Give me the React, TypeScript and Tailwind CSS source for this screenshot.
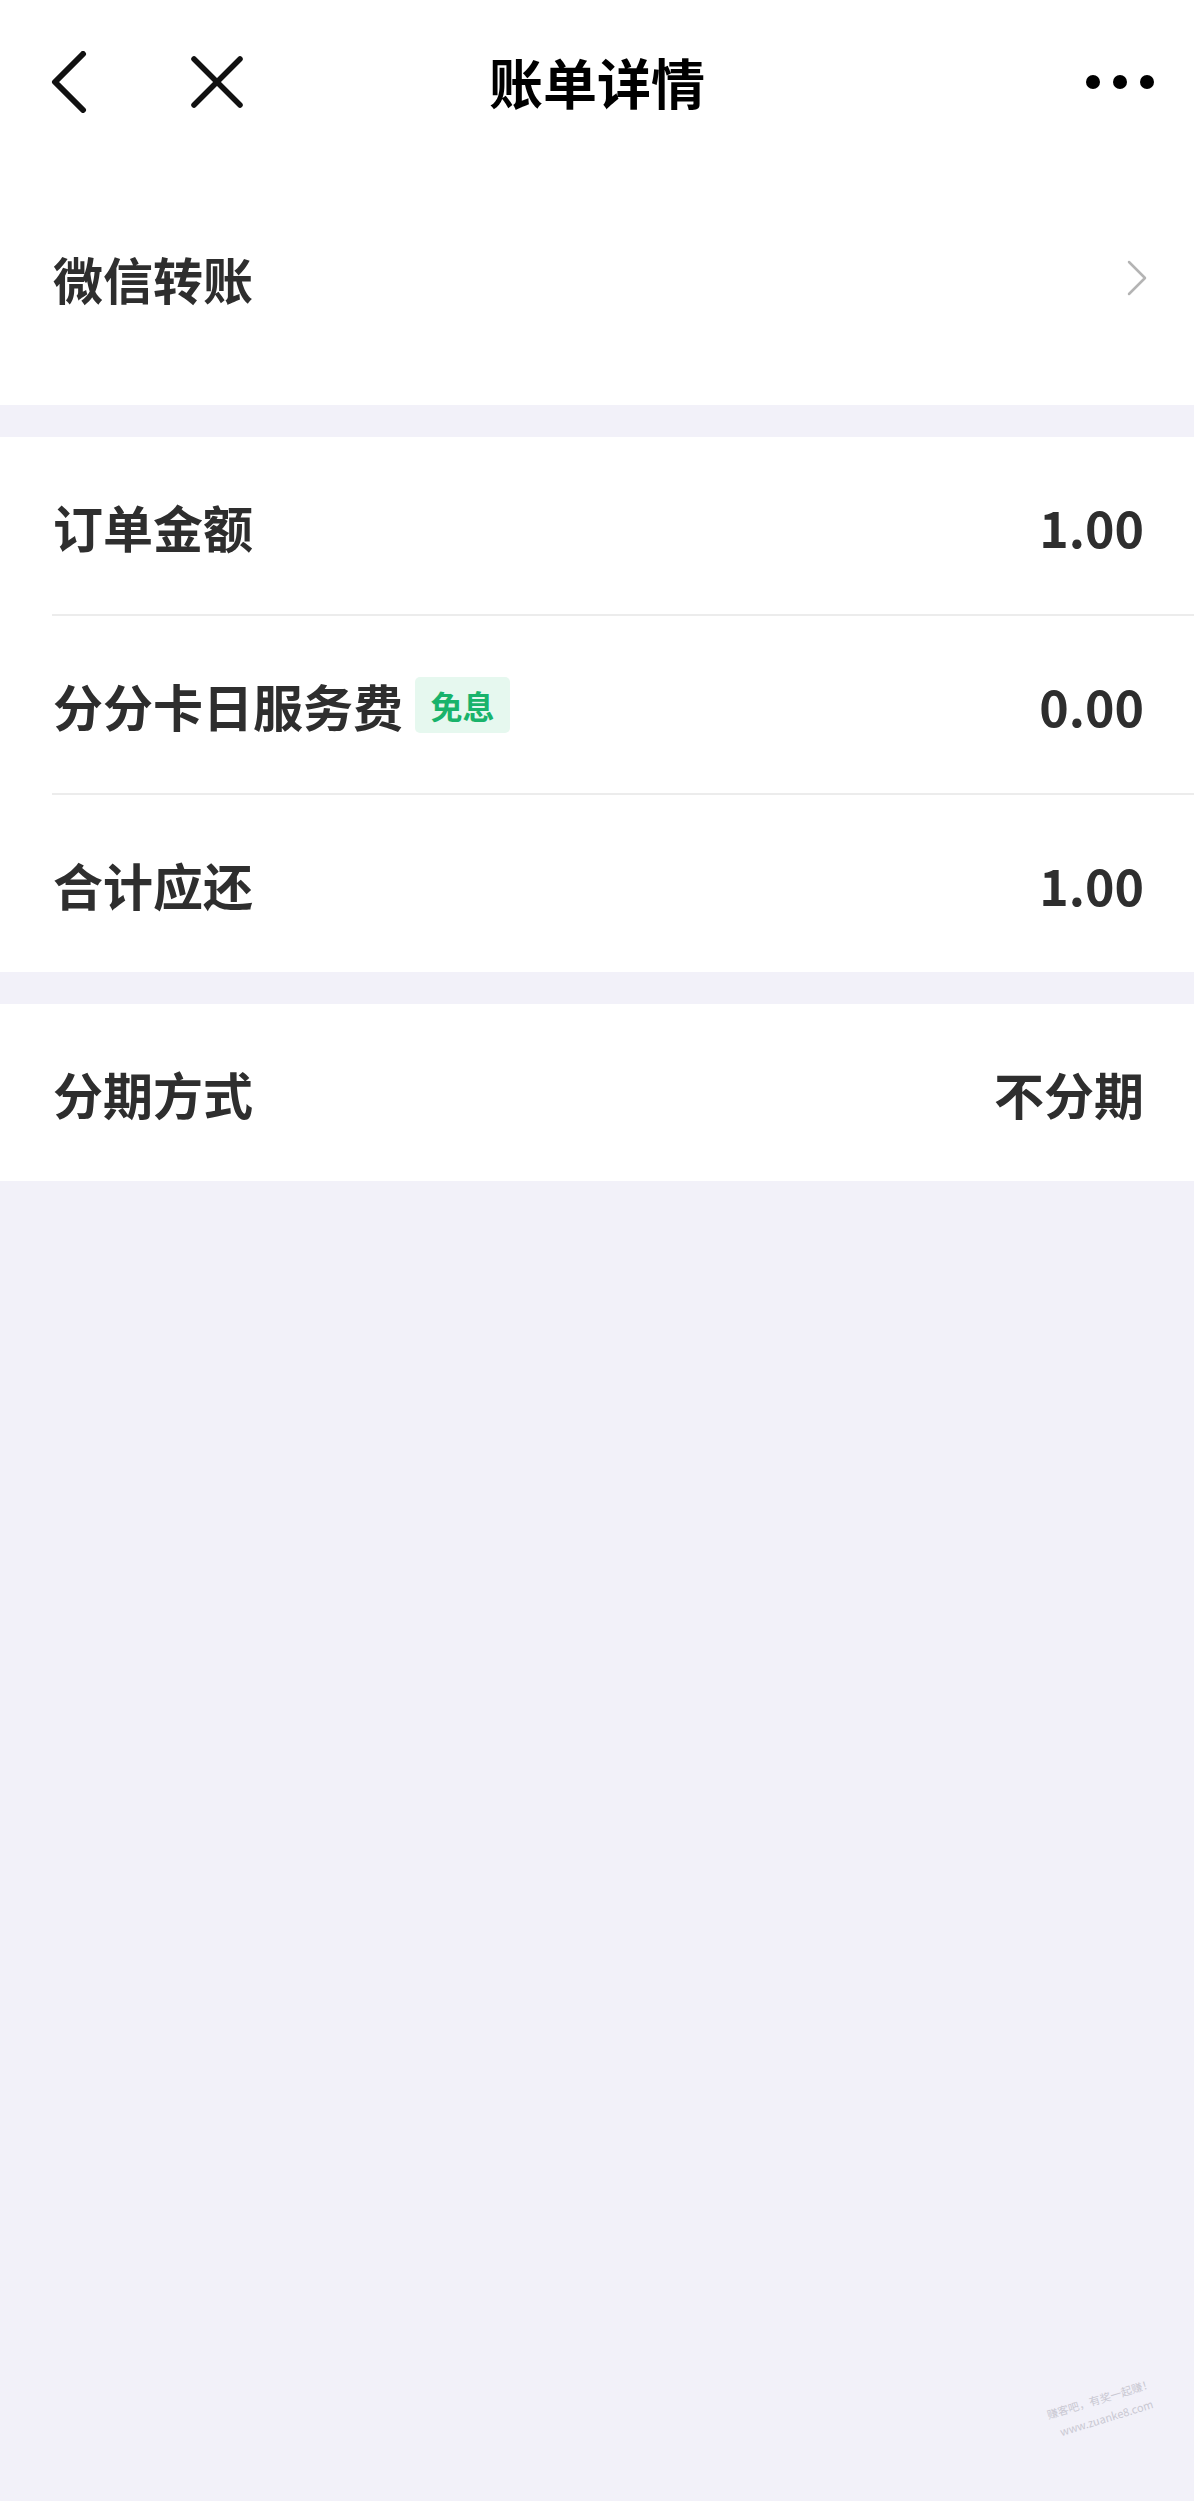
import React from "react";

const font = { fontFamily: '"Noto Sans CJK SC", "Noto Sans", sans-serif' };

function Row({ label, value, badge, border }: { label: string; value: string; badge?: string; border?: boolean }) {
  return (
    <div className="relative">
      <div className="flex h-[177px] items-center justify-between pl-[53px] pr-[50px]">
        <div className="flex items-center">
          <span className="text-[50px] font-semibold leading-none text-[#2e2e2e]">{label}</span>
          {badge && (
            <span className="ml-[12px] flex h-[56px] w-[95px] items-center justify-center rounded-[5px] bg-[#e6f8ef] text-[32px] font-semibold leading-none text-[#19b36b]">
              {badge}
            </span>
          )}
        </div>
        <span className="text-[50px] font-semibold leading-none text-[#2e2e2e]">{value}</span>
      </div>
      {border && <div className="ml-[52px] h-[2px] bg-[#ececec]" />}
    </div>
  );
}

export default function App() {
  return (
    <div className="relative min-h-[2501px] w-full bg-[#f2f1f9]" style={font}>
      <div className="bg-white pb-[13px]">
        <div className="relative flex h-[164px] items-center">
          <div className="flex items-center pl-[50px]">
            <svg width="40" height="62" viewBox="0 0 40 62" className="mr-[100px]">
              <polyline points="33,3 5,31 33,59" fill="none" stroke="#111" strokeWidth="6" strokeLinecap="round" strokeLinejoin="round" />
            </svg>
            <svg width="54" height="54" viewBox="0 0 54 54">
              <line x1="4" y1="4" x2="50" y2="50" stroke="#111" strokeWidth="5.5" strokeLinecap="round" />
              <line x1="50" y1="4" x2="4" y2="50" stroke="#111" strokeWidth="5.5" strokeLinecap="round" />
            </svg>
          </div>
          <div className="absolute left-1/2 top-1/2 -translate-x-1/2 -translate-y-1/2 text-[54px] font-bold leading-none text-black">
            账单详情
          </div>
          <div className="ml-auto mr-[40px] flex items-center gap-[13px]">
            <span className="h-[14px] w-[14px] rounded-full bg-black" />
            <span className="h-[14px] w-[14px] rounded-full bg-black" />
            <span className="h-[14px] w-[14px] rounded-full bg-black" />
          </div>
        </div>
        <div className="flex h-[228px] items-center justify-between pl-[53px] pr-[46px]">
          <span className="text-[50px] font-semibold leading-none text-[#2e2e2e]">微信转账</span>
          <svg width="22" height="38" viewBox="0 0 22 38">
            <polyline points="3,3 19,19 3,35" fill="none" stroke="#b4b4b4" strokeWidth="2.5" strokeLinecap="round" strokeLinejoin="round" />
          </svg>
        </div>
      </div>

      <div className="mt-[32px] bg-white">
        <Row label="订单金额" value="1.00" border />
        <Row label="分分卡日服务费" value="0.00" badge="免息" border />
        <Row label="合计应还" value="1.00" />
      </div>

      <div className="mt-[32px] bg-white">
        <Row label="分期方式" value="不分期" />
      </div>

      <div className="absolute left-[1050px] top-[2404px] origin-left -rotate-[17deg] whitespace-pre text-[11px] leading-[20px] text-[#c9c8d2]">
        {"赚客吧，有奖一起赚！\n   www.zuanke8.com"}
      </div>
    </div>
  );
}
